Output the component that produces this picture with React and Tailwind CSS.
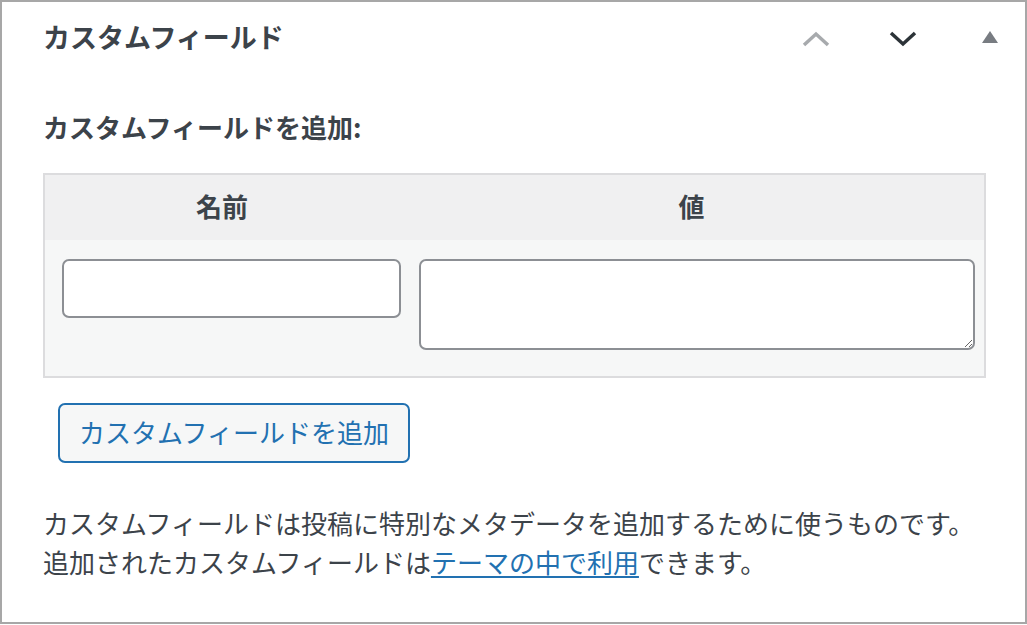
export default function App() {
  return (
    <div
      className="w-[1027px] h-[624px] border-2 border-[#a7a7a7] bg-white text-[#3c434a] flex flex-col"
      style={{ fontFamily: '"Noto Sans CJK JP", "Noto Sans", sans-serif' }}
    >
      <div className="h-[74px] shrink-0 flex items-center pl-[41px]">
        <h2 className="-mt-[5px] text-[27px] font-bold leading-none text-[#3c434a]">
          カスタムフィールド
        </h2>
        <div className="ml-auto flex items-center gap-[47px] pr-[15px]">
          <button className="w-[40px] h-[40px] grid place-items-center">
            <svg width="28" height="16" viewBox="0 0 28 16">
              <path d="M2 14 L14 3 L26 14" fill="none" stroke="#a7aaad" strokeWidth="3.5" />
            </svg>
          </button>
          <button className="w-[40px] h-[40px] grid place-items-center">
            <svg width="28" height="16" viewBox="0 0 28 16">
              <path d="M2 2 L14 13 L26 2" fill="none" stroke="#2c3338" strokeWidth="3.5" />
            </svg>
          </button>
          <button className="w-[40px] h-[40px] grid place-items-center -mt-[4px]">
            <svg width="16" height="12" viewBox="0 0 16 12">
              <path d="M8 0 L16 12 L0 12 Z" fill="#787c82" />
            </svg>
          </button>
        </div>
      </div>

      <div className="pl-[41px] pr-[39px]">
        <p className="mt-[31px] text-[26px] font-bold leading-[39px]">カスタムフィールドを追加:</p>

        <div className="mt-[27px] w-[943px] border-2 border-[#dcdcde] bg-[#f6f7f7]">
          <div className="h-[65px] pb-[5px] bg-[#f0f0f1] flex items-center text-[26px] font-bold">
            <div className="w-[354px] text-center">名前</div>
            <div className="w-[585px] text-center">値</div>
          </div>
          <div className="flex items-start pl-[17px] pt-[19px] pb-[26px] gap-[18px]">
            <input
              type="text"
              className="w-[339px] h-[59px] bg-white border-2 border-[#8c8f94] rounded-[7px] outline-none px-3 text-[26px]"
            />
            <textarea className="w-[556px] h-[91px] bg-white border-2 border-[#8c8f94] rounded-[7px] outline-none px-3 text-[26px]" />
          </div>
        </div>

        <button className="mt-[25px] ml-[15px] w-[352px] h-[60px] pb-[2px] border-2 border-[#2271b1] rounded-[7px] bg-[#f6f7f7] text-[#2271b1] text-[26px] leading-none flex items-center justify-center">
          カスタムフィールドを追加
        </button>

        <p className="mt-[40px] text-[26px] leading-[39px] text-[#3c434a]">
          カスタムフィールドは投稿に特別なメタデータを追加するために使うものです。
          <br />
          追加されたカスタムフィールドは
          <a href="#" className="text-[#2271b1] underline underline-offset-[3px] decoration-2">
            テーマの中で利用
          </a>
          できます。
        </p>
      </div>
    </div>
  );
}
